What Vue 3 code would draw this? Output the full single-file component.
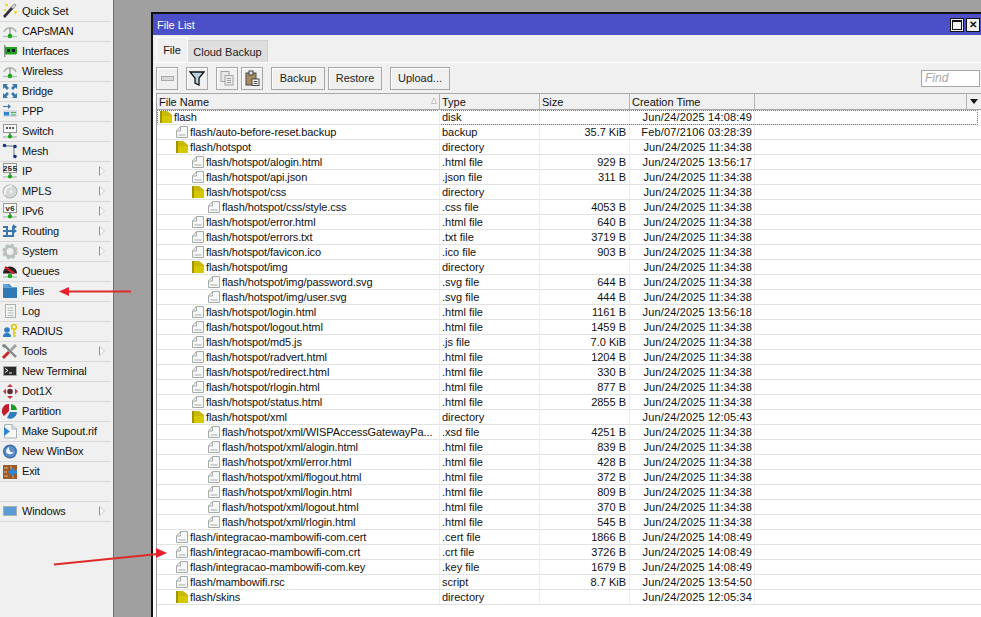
<script setup>
const icons = {
  wand: '<path d="M3 15 L5 17 L13 8 L11 6Z" fill="#333"/><path d="M11 6 L13 8 L16 4 L14.500 3Z" fill="#ddd" stroke="#555" stroke-width=".6"/><path d="M5 4h3M6.500 2.500v3M4 9h2M5 8v2M14 11h3M15.500 10v3" stroke="#e8dc20" stroke-width="1.400"/>',
  wifi: '<path d="M4 11 A6.500 6.500 0 0 1 16 11" fill="#f2f2f2" stroke="#b4bcb4" stroke-width="1.800"/><path d="M10 7 V13" stroke="#9aa39a" stroke-width="1.500"/><path d="M3 15.500 H17" stroke="#a4cca4" stroke-width="1.400"/><circle cx="10" cy="15" r="2.300" fill="#1da51d"/>',
  iface: '<rect x="4" y="4" width="1.500" height="12" fill="#8a948e"/><rect x="5" y="6" width="12" height="7" fill="#21a021"/><rect x="7" y="8" width="3" height="3" fill="#123"/><rect x="12" y="8" width="3" height="3" fill="#123"/><rect x="6" y="13" width="10" height="1" fill="#8c8"/>',
  bridge: '<g fill="#3d78ad"><path d="M3 3h5l-1.500 1.500 2.500 2.500-2 2-2.500-2.500L3 8Z"/><path d="M17 3h-5l1.500 1.500-2.500 2.500 2 2 2.500-2.500L17 8Z"/><path d="M3 17h5l-1.500-1.500 2.500-2.500-2-2-2.500 2.500L3 12Z"/><path d="M17 17h-5l1.500-1.500-2.500-2.500 2-2 2.500 2.500L17 12Z"/></g>',
  ppp: '<path d="M3 5h5V3l3 2.500L8 8V6H3Z" fill="#3d78ad"/><rect x="3" y="9" width="14" height="7" fill="#d5dbe0"/><rect x="4" y="11" width="5" height="3.500" fill="#2f86d0"/><path d="M11 11.500h5M11 14h5" stroke="#54b054" stroke-width="1.200"/>',
  sw: '<rect x="3.500" y="3.500" width="13" height="8" fill="#fafafa" stroke="#909890"/><path d="M6 7h2M9 7h2M12 7h2" stroke="#222" stroke-width="1.400"/><path d="M10 12v3" stroke="#888" stroke-width="2"/><path d="M3 16h14" stroke="#a4cca4" stroke-width="1.400"/><circle cx="10" cy="15.500" r="2.100" fill="#1da51d"/>',
  mesh: '<path d="M5 5H14V15" fill="none" stroke="#a8b4b4" stroke-width="2"/><g fill="#1b2f8f"><circle cx="4.500" cy="4.500" r="1.800"/><circle cx="15" cy="5.500" r="1.800"/><circle cx="15" cy="15.500" r="1.800"/></g>',
  ip: '<rect x="3.500" y="2.500" width="13" height="9" fill="#fafafa" stroke="#909890"/><text x="10" y="10" font-size="8" font-weight="700" text-anchor="middle" font-family="Liberation Mono" fill="#222">255</text><path d="M10 12v2" stroke="#888" stroke-width="2"/><path d="M3 16h14" stroke="#a4cca4" stroke-width="1.400"/><circle cx="10" cy="15.500" r="2.100" fill="#1da51d"/>',
  mpls: '<ellipse cx="10" cy="10.500" rx="7" ry="6.500" fill="#d3dad5" stroke="#a6aeaa"/><path d="M5 14 C4 9 7 5 12 5" fill="none" stroke="#f2f2f2" stroke-width="2"/><circle cx="11" cy="10.500" r="1.500" fill="#f0f4f2"/>',
  ipv6: '<rect x="3.500" y="2.500" width="13" height="9" fill="#fafafa" stroke="#909890"/><text x="10" y="10" font-size="8" font-weight="700" text-anchor="middle" font-family="Liberation Mono" fill="#222">v6</text><path d="M10 12v2" stroke="#888" stroke-width="2"/><path d="M3 16h14" stroke="#a4cca4" stroke-width="1.400"/><circle cx="10" cy="15.500" r="2.100" fill="#1da51d"/>',
  routing: '<path d="M3 6H7V15H13V6H15M3 15H6" fill="none" stroke="#3d78ad" stroke-width="2"/><path d="M3 10H14" stroke="#3d78ad" stroke-width="2"/><path d="M13 3l4 3-4 3ZM13 7l4 3-4 3Z" fill="#3d78ad"/>',
  system: '<circle cx="10" cy="10.500" r="5" fill="none" stroke="#b9c1bd" stroke-width="3"/><circle cx="10" cy="10.500" r="6.500" fill="none" stroke="#b9c1bd" stroke-width="2.500" stroke-dasharray="3 2.100"/>',
  queues: '<path d="M3 12.500 A7 7 0 0 1 17 12.500Z" fill="#222"/><path d="M5 6 L14 12.500" stroke="#d8202a" stroke-width="2.200"/><path d="M3 16h14" stroke="#a4cca4" stroke-width="1.400"/><circle cx="10" cy="15" r="2.300" fill="#1da51d"/>',
  files: '<path d="M3 3H9L12 6H17V17H3Z" fill="#2f79b5"/><path d="M3 3H8L10 6H17V7H3Z" fill="#5ea4da"/>',
  log: '<rect x="5.500" y="3.500" width="10" height="13" fill="#f4f6f4" stroke="#aab4ae"/><path d="M7.500 7h6M7.500 9.500h6M7.500 12h6M7.500 14.500h6" stroke="#b3bcb6"/>',
  radius: '<circle cx="7" cy="9" r="2.800" fill="#2f7dc0"/><path d="M3 16c0-2.500 1-4 4-4s4 1.500 4 4Z" fill="#2f7dc0"/><circle cx="14" cy="6" r="2.300" fill="none" stroke="#d8c720" stroke-width="1.800"/><path d="M14 9v7M14 12h2M14 15h2" stroke="#d8c720" stroke-width="1.500"/>',
  tools: '<path d="M4 4l12 12" stroke="#7e8784" stroke-width="2.400"/><path d="M3 3l3 1v2l-2 1-2-2Z" fill="#7e8784"/><path d="M16 4l-5 5" stroke="#9ca3a0" stroke-width="3"/><path d="M9 11l-6 6" stroke="#c32a2e" stroke-width="3"/>',
  term: '<rect x="3.500" y="5.500" width="13" height="9" fill="#2a2a2a" stroke="#aaa"/><path d="M5 7.500l3 2-3 2" fill="none" stroke="#eee"/><path d="M9 12h3" stroke="#eee"/>',
  dot: '<path d="M10 3l3 3H7ZM10 18l-3-3h6ZM3 10.500l3-3v6ZM18 10.500l-3 3v-6Z" fill="#c5383c"/><circle cx="10" cy="10.500" r="2.800" fill="#5e2a30"/>',
  part: '<path d="M9 3A7 7 0 0 0 4 15L9 10Z" fill="#bf1f2c"/><path d="M11 3A7 7 0 0 1 17 9H11Z" fill="#1c9a2a"/><path d="M17 11A7 7 0 0 1 7 17L10 11Z" fill="#2f7dc0"/>',
  supout: '<path d="M4.500 3.500H12L16.500 8V17H4.500Z" fill="#f6f8f8" stroke="#aab4b4"/><path d="M12 3.500V8H16.500" fill="#dde" stroke="#aab4b4"/><path d="M4 6L10 10.500L4 15Z" fill="#2f86d0"/>',
  winbox: '<circle cx="10" cy="10.500" r="7" fill="#3a6ea8"/><circle cx="10" cy="10.500" r="5.500" fill="#5b8fc6"/><path d="M6 11c2 3 6 3 8 0-2 1-5 0-5-5-2 1-3 3-3 5Z" fill="#eef4fa"/>',
  exit: '<rect x="3" y="4" width="14" height="14" fill="#9a5a2c"/><path d="M4 7h4M4 11h3M4 15h4M11 5v3M13 14v3" stroke="#d9b48c"/><path d="M8 11l6-5v3h3v4h-3v3Z" fill="#2f86d0"/>',
  win: '<rect x="3.500" y="5.500" width="13" height="9" fill="#5a9bd8" stroke="#a8b0b0"/>'
}
const menu = [
  ['Quick Set', 'wand'], ['CAPsMAN', 'wifi'], ['Interfaces', 'iface'], ['Wireless', 'wifi'], ['Bridge', 'bridge'],
  ['PPP', 'ppp'], ['Switch', 'sw'], ['Mesh', 'mesh'], ['IP', 'ip', 1], ['MPLS', 'mpls', 1], ['IPv6', 'ipv6', 1],
  ['Routing', 'routing', 1], ['System', 'system', 1], ['Queues', 'queues'], ['Files', 'files'], ['Log', 'log'],
  ['RADIUS', 'radius'], ['Tools', 'tools', 1], ['New Terminal', 'term'], ['Dot1X', 'dot'], ['Partition', 'part'],
  ['Make Supout.rif', 'supout'], ['New WinBox', 'winbox'], ['Exit', 'exit'], ['', ''], ['Windows', 'win', 1]
]
const J = 'Jun/24/2025 '
const h = 'flash/hotspot/'
const x = h + 'xml/'
const rows = [
  [0, 'flash', 'disk', '', J + '14:08:49', 1],
  [1, 'flash/auto-before-reset.backup', 'backup', '35.7 KiB', 'Feb/07/2106 03:28:39'],
  [1, 'flash/hotspot', 'directory', '', J + '11:34:38', 1],
  [2, h + 'alogin.html', '.html file', '929 B', J + '13:56:17'],
  [2, h + 'api.json', '.json file', '311 B', J + '11:34:38'],
  [2, h + 'css', 'directory', '', J + '11:34:38', 1],
  [3, h + 'css/style.css', '.css file', '4053 B', J + '11:34:38'],
  [2, h + 'error.html', '.html file', '640 B', J + '11:34:38'],
  [2, h + 'errors.txt', '.txt file', '3719 B', J + '11:34:38'],
  [2, h + 'favicon.ico', '.ico file', '903 B', J + '11:34:38'],
  [2, h + 'img', 'directory', '', J + '11:34:38', 1],
  [3, h + 'img/password.svg', '.svg file', '644 B', J + '11:34:38'],
  [3, h + 'img/user.svg', '.svg file', '444 B', J + '11:34:38'],
  [2, h + 'login.html', '.html file', '1161 B', J + '13:56:18'],
  [2, h + 'logout.html', '.html file', '1459 B', J + '11:34:38'],
  [2, h + 'md5.js', '.js file', '7.0 KiB', J + '11:34:38'],
  [2, h + 'radvert.html', '.html file', '1204 B', J + '11:34:38'],
  [2, h + 'redirect.html', '.html file', '330 B', J + '11:34:38'],
  [2, h + 'rlogin.html', '.html file', '877 B', J + '11:34:38'],
  [2, h + 'status.html', '.html file', '2855 B', J + '11:34:38'],
  [2, h + 'xml', 'directory', '', J + '12:05:43', 1],
  [3, x + 'WISPAccessGatewayPa...', '.xsd file', '4251 B', J + '11:34:38'],
  [3, x + 'alogin.html', '.html file', '839 B', J + '11:34:38'],
  [3, x + 'error.html', '.html file', '428 B', J + '11:34:38'],
  [3, x + 'flogout.html', '.html file', '372 B', J + '11:34:38'],
  [3, x + 'login.html', '.html file', '809 B', J + '11:34:38'],
  [3, x + 'logout.html', '.html file', '370 B', J + '11:34:38'],
  [3, x + 'rlogin.html', '.html file', '545 B', J + '11:34:38'],
  [1, 'flash/integracao-mambowifi-com.cert', '.cert file', '1866 B', J + '14:08:49'],
  [1, 'flash/integracao-mambowifi-com.crt', '.crt file', '3726 B', J + '14:08:49'],
  [1, 'flash/integracao-mambowifi-com.key', '.key file', '1679 B', J + '14:08:49'],
  [1, 'flash/mambowifi.rsc', 'script', '8.7 KiB', J + '13:54:50'],
  [1, 'flash/skins', 'directory', '', J + '12:05:34', 1]
]
const indent = (d) => ({ paddingLeft: 2 + d * 16 + 'px' })
</script>

<template>
  <div class="page">
    <nav class="side">
      <div v-for="(m, i) in menu" :key="i" class="item">
        <svg v-if="m[1]" class="ic" viewBox="0 0 20 20" width="20" height="20" v-html="icons[m[1]]"></svg>
        <span class="lbl">{{ m[0] }}</span>
        <svg v-if="m[2]" class="sub" viewBox="0 0 6 10" width="6" height="10"><path d="M.5 .5V9.500L5.500 5Z" fill="#fff"/><path d="M.5 .5V9.500" stroke="#909090"/><path d="M.5 .5L5.500 5L.5 9.500" fill="none" stroke="#c8c8c8"/></svg>
      </div>
    </nav>
    <main class="desk">
      <section class="win">
        <header class="title">
          <span class="tt">File List</span>
          <span class="tb"><i class="max"></i></span>
          <span class="tb x">✕</span>
        </header>
        <div class="body">
          <div class="tabs">
            <span class="tab on">File</span>
            <span class="tab">Cloud Backup</span>
          </div>
          <div class="tools">
            <button class="btn ico"><i class="minus"></i></button>
            <button class="btn ico g1"><svg viewBox="0 0 16 16" width="16" height="16"><path d="M1 2H15L10 8V15L6 13V8Z" fill="#b9d5e2" stroke="#111" stroke-width="1.300"/></svg></button>
            <button class="btn ico g1"><svg viewBox="0 0 16 16" width="16" height="16"><g fill="#e8e8e8" stroke="#a4a4a4"><rect x="2" y="1.500" width="8" height="10"/><rect x="6" y="5.500" width="8" height="9.500"/></g><path d="M8 8.500h4M8 10.500h4M8 12.500h4" stroke="#a4a4a4"/></svg></button>
            <button class="btn ico g2"><svg viewBox="0 0 16 16" width="16" height="16"><rect x="2" y="3" width="10" height="12" fill="#a98a63" stroke="#4a4a4a"/><rect x="5" y="1" width="4" height="4" fill="#ddd" stroke="#444"/><rect x="8" y="9" width="7" height="6.500" fill="#fff" stroke="#444"/><path d="M9.500 11.500h4M9.500 13.500h4" stroke="#444"/></svg></button>
            <button class="btn txt g1 w54">Backup</button>
            <button class="btn txt g2 w54">Restore</button>
            <button class="btn txt g1 w60">Upload...</button>
            <span class="find">Find</span>
          </div>
          <div class="table">
            <div class="row head">
              <div class="c name">File Name<svg class="sort" viewBox="0 0 7 7" width="7" height="7"><path d="M4 1L6.500 6.500H1.500Z" fill="#fff" stroke="#b0b0b0" stroke-width=".8"/></svg></div>
              <div class="c type">Type</div>
              <div class="c size">Size</div>
              <div class="c time">Creation Time</div>
              <div class="c rest"></div>
              <div class="c drop"><i></i></div>
            </div>
            <div v-for="(r, i) in rows" :key="i" class="row" :class="{ sel: i === 0 }">
              <div class="c name" :style="indent(r[0])">
                <svg v-if="r[5]" class="fi" viewBox="0 0 14 14" width="14" height="14"><path d="M1 1H8L13 5V13H1Z" fill="#c8b800"/><path d="M1 1H3V13H1Z" fill="#a09400"/><path d="M3 6H13V13H3Z" fill="#d6c800"/></svg>
                <svg v-else class="fi" viewBox="0 0 14 14" width="14" height="14"><path d="M1.500 12.500V6L5.500 1.500H12.500V12.500Z" fill="#f8f8f8" stroke="#a4aca8"/><path d="M1.500 6H5.500V1.500M3.500 10H10.500" fill="none" stroke="#a4aca8"/></svg>
                <span class="nm">{{ r[1] }}</span>
              </div>
              <div class="c type">{{ r[2] }}</div>
              <div class="c size">{{ r[3] }}</div>
              <div class="c time">{{ r[4] }}</div>
              <div class="c tail"></div>
            </div>
          </div>
        </div>
      </section>
    </main>
    <svg class="arrows" width="981" height="617" viewBox="0 0 981 617">
      <path d="M131 291.500H68" stroke="#e02a2a" stroke-width="2"/>
      <path d="M59 291.500L69 287V296Z" fill="#e8202a"/>
      <path d="M54 564.500L158 554" stroke="#e02a2a" stroke-width="2"/>
      <path d="M167 553L156 548V558Z" fill="#e8202a"/>
    </svg>
  </div>
</template>

<style scoped>
.page {
  position: relative;
  display: flex;
  width: 981px;
  height: 617px;
  overflow: hidden;
  background: #a0a0a0;
  font: 11px "Liberation Sans", Arial, sans-serif;
  color: #111;
}
.side {
  width: 113px;
  flex: none;
  padding-top: 2px;
  background: #f0f0f0;
  border-right: 1px solid #6e6e6e;
}
.item {
  display: flex;
  align-items: center;
  position: relative;
  width: 111px;
  height: 19px;
  border-bottom: 1px solid #d8d8d8;
}
.ic { flex: none; margin: -2px 2px 0 0; }
.lbl { white-space: nowrap; margin-top: -1px; letter-spacing: -0.15px; }
.sub { position: absolute; left: 99px; top: 4px; }
.desk {
  flex: 1;
  min-width: 0;
  padding: 12px 0 0 37px;
}
.win {
  height: 620px;
  border: 2px solid #111;
  border-right: 0;
  border-bottom: 0;
  display: flex;
  flex-direction: column;
}
.title {
  height: 21px;
  flex: none;
  display: flex;
  align-items: center;
  gap: 2px;
  background: #4c50c8;
  color: #fff;
  padding: 0 1px 0 4px;
}
.tt { flex: 1; }
.tb {
  width: 14px;
  height: 14px;
  box-sizing: border-box;
  border: 1px solid #111;
  background: #f0f0f0;
  display: flex;
  align-items: center;
  justify-content: center;
  color: #111;
  font-size: 10px;
  font-weight: 700;
}
.max { width: 10px; height: 10px; border: 1px solid #111; border-top-width: 2px; box-sizing: border-box; display: block; }
.body { flex: 1; background: #fff; display: flex; flex-direction: column; min-height: 0; }
.tabs {
  height: 28px;
  flex: none;
  background: #f0f0f0;
  display: flex;
  align-items: flex-end;
  padding-left: 3px;
  border-bottom: 1px solid #fff;
  box-sizing: border-box;
}
.tab {
  width: 80px;
  height: 22px;
  line-height: 22px;
  text-align: center;
  background: #dedede;
  border: solid #d0d0d0;
  border-width: 1px 1px 0 0;
  box-sizing: border-box;
  color: #222;
}
.tab.on {
  height: 25px;
  line-height: 24px;
  width: 32px;
  background: #f0f0f0;
  border: 1px solid #fff;
  border-bottom: 0;
  color: #111;
}
.tools {
  height: 30px;
  flex: none;
  background: #f0f0f0;
  display: flex;
  align-items: center;
  padding: 0 1px 0 3px;
}
.btn {
  height: 23px;
  box-sizing: border-box;
  background: #f0f0f0;
  border: 1px solid #a8a8a8;
  border-radius: 0;
  box-shadow: inset 1px 1px 0 #fff;
  padding: 0;
  font: inherit;
  color: #222;
  display: flex;
  align-items: center;
  justify-content: center;
}
.ico { width: 22px; }
.w54 { width: 54px; }
.w60 { width: 60px; }
.g1 { margin-left: 8px; }
.g2 { margin-left: 3px; }
.minus { width: 13px; height: 5px; background: #d8d8d8; border: 1px solid #aaa; box-sizing: border-box; display: block; }
.find {
  margin-left: auto;
  width: 59px;
  height: 17px;
  box-sizing: border-box;
  background: #fff;
  border: 1px solid #a8a8a8;
  color: #a8a8a8;
  font-style: italic;
  font-size: 12px;
  padding-left: 3px;
  line-height: 15px;
}
.table { margin-left: 3px; border-left: 1px solid #a0a0a0; flex: 1; background: #fff; }
.row {
  display: flex;
  height: 15px;
  line-height: 14px;
  position: relative;
}
.row .c {
  height: 15px;
  box-sizing: border-box;
  border-bottom: 1px solid #e2e2e2;
  border-right: 1px solid #ececec;
  flex: none;
  white-space: nowrap;
  overflow: hidden;
}
.name { width: 283px; display: flex; align-items: center; position: relative; }
.type { width: 100px; padding-left: 2px; }
.size { width: 90px; padding-right: 3px; text-align: right; }
.time { width: 125px; padding-right: 2px; text-align: right; letter-spacing: 0.15px; }
.row .tail { flex: 1; border-right: 0; }
.fi { flex: none; margin-right: 1px; }
.head {
  height: 15px;
  background: #f0f0f0;
  border-top: 1px solid #a8a8a8;
  border-bottom: 1px solid #a8a8a8;
}
.head .c {
  line-height: 16px;
  border-bottom: 0;
  border-right: 1px solid #b4b4b4;
  padding-left: 2px;
  text-align: left;
  letter-spacing: 0;
}
.head .rest { width: 212px; padding: 0; }
.head .drop { flex: 1; border-right: 0; display: flex; align-items: center; justify-content: center; padding: 0; }
.drop i { width: 0; height: 0; border: 4px solid transparent; border-top: 5px solid #111; border-bottom: 0; display: block; }
.sort { position: absolute; right: 2px; top: 3px; }
.sel { outline: 1px dotted #777; outline-offset: -1px; width: 821px; }
.nm { display: block; letter-spacing: -0.1px; }
.arrows { position: absolute; left: 0; top: 0; pointer-events: none; }
</style>
